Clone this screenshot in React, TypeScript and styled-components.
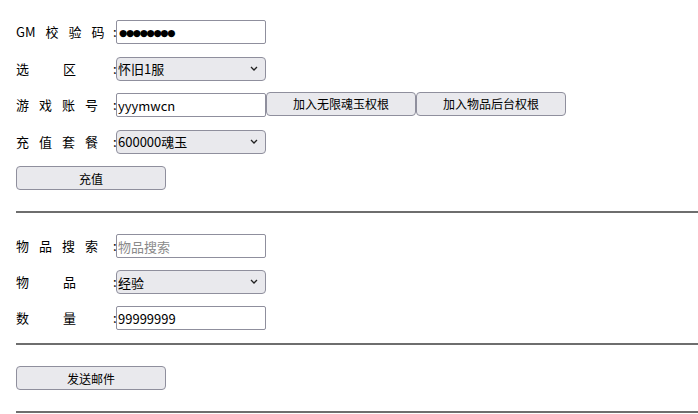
import React from "react";
import styled, { createGlobalStyle } from "styled-components";

const GlobalStyle = createGlobalStyle`
  body {
    margin: 0;
    background: #ffffff;
    font-family: "Noto Sans CJK SC", "Noto Sans", sans-serif;
    font-size: 13px;
    color: #000000;
  }
`;

const Page = styled.div`
  padding: 20px 0 0 16px;
`;

const Section = styled.div<{ $gap: number }>`
  display: flex;
  flex-direction: column;
  gap: ${(p) => p.$gap}px;
`;

const Row = styled.div`
  display: flex;
  align-items: center;
  height: 24px;
`;

const Label = styled.span`
  display: flex;
  width: 97px;
  gap: 11px;
  white-space: nowrap;
  line-height: 24px;
`;

const Word = styled.span`
  margin-right: -1px;
`;

const Blank = styled.span`
  width: 13px;
`;

const Colon = styled.span`
  width: 3px;
  line-height: 24px;
`;

const TextInput = styled.input`
  box-sizing: border-box;
  width: 150px;
  height: 24px;
  margin: 0;
  padding: 0 1px;
  border: 1px solid #8f8f9d;
  border-radius: 2px;
  background: #ffffff;
  font-family: "Noto Sans CJK SC", "Noto Sans", sans-serif;
  font-size: 13px;
  color: #000000;
  outline: none;

  &::placeholder {
    color: #8a8a8a;
  }
`;

const DotsInput = styled(TextInput)`
  font-family: "DejaVu Sans", sans-serif;
  font-size: 9.5px;
  letter-spacing: -1.4px;
  padding-left: 2px;
`;

const SelectWrap = styled.div`
  position: relative;
  width: 150px;
  height: 24px;
`;

const Select = styled.select`
  box-sizing: border-box;
  appearance: none;
  width: 100%;
  height: 100%;
  margin: 0;
  padding: 0 1px;
  border: 1px solid #8f8f9d;
  border-radius: 4px;
  background: #e9e9ed;
  font-family: "Noto Sans CJK SC", "Noto Sans", sans-serif;
  font-size: 13px;
  color: #000000;
  outline: none;
`;

const Chevron = styled.svg`
  position: absolute;
  right: 8px;
  top: 9px;
  pointer-events: none;
`;

const Button = styled.button`
  box-sizing: border-box;
  width: 150px;
  height: 24px;
  margin: 0;
  padding: 0;
  border: 1px solid #8f8f9d;
  border-radius: 4px;
  background: #e9e9ed;
  font-family: "Noto Sans CJK SC", "Noto Sans", sans-serif;
  font-size: 12px;
  color: #000000;
`;

const RaisedButton = styled(Button)`
  margin-top: -3px;
`;

const Rule = styled.hr`
  height: 0;
  margin: 21px 0;
  border: 0;
  border-top: 2px solid #6e6e6e;
`;

const TightRule = styled(Rule)`
  margin-top: 13px;
`;

const Caption: React.FC<{ parts: string[] }> = ({ parts }) => (
  <Label>
    {parts.map((p, i) => (p === "" ? <Blank key={i} /> : <Word key={i}>{p}</Word>))}
  </Label>
);

const Dropdown: React.FC<{ options: string[] }> = ({ options }) => (
  <SelectWrap>
    <Select defaultValue={options[0]}>
      {options.map((o) => (
        <option key={o}>{o}</option>
      ))}
    </Select>
    <Chevron width="8" height="5" viewBox="0 0 8 5">
      <path d="M1 1 L4 4 L7 1" fill="none" stroke="#222" strokeWidth="1.3" />
    </Chevron>
  </SelectWrap>
);

export default function App() {
  return (
    <>
      <GlobalStyle />
      <Page>
        <Section $gap={12.5}>
          <Row>
            <Caption parts={["GM", "校", "验", "码"]} />
            <Colon>:</Colon>
            <DotsInput defaultValue="●●●●●●●●" />
          </Row>
          <Row>
            <Caption parts={["选", "", "区"]} />
            <Colon>:</Colon>
            <Dropdown options={["怀旧1服"]} />
          </Row>
          <Row>
            <Caption parts={["游", "戏", "账", "号"]} />
            <Colon>:</Colon>
            <TextInput defaultValue="yyymwcn" />
            <RaisedButton>加入无限魂玉权根</RaisedButton>
            <RaisedButton>加入物品后台权根</RaisedButton>
          </Row>
          <Row>
            <Caption parts={["充", "值", "套", "餐"]} />
            <Colon>:</Colon>
            <Dropdown options={["600000魂玉"]} />
          </Row>
          <Row>
            <Button>充值</Button>
          </Row>
        </Section>
        <Rule />
        <Section $gap={12}>
          <Row>
            <Caption parts={["物", "品", "搜", "索"]} />
            <Colon>:</Colon>
            <TextInput placeholder="物品搜索" />
          </Row>
          <Row>
            <Caption parts={["物", "", "品"]} />
            <Colon>:</Colon>
            <Dropdown options={["经验"]} />
          </Row>
          <Row>
            <Caption parts={["数", "", "量"]} />
            <Colon>:</Colon>
            <TextInput defaultValue="99999999" />
          </Row>
        </Section>
        <TightRule />
        <Row>
          <Button>发送邮件</Button>
        </Row>
        <Rule />
      </Page>
    </>
  );
}
